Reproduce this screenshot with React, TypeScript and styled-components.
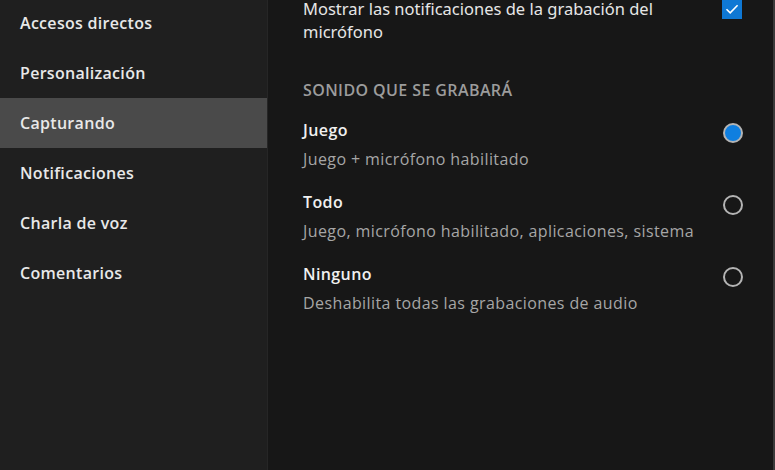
import React, { useState } from 'react'
import styled, { createGlobalStyle } from 'styled-components'

const GlobalStyle = createGlobalStyle`
  html, body {
    margin: 0;
    padding: 0;
    background: #171717;
  }
  #root {
    height: 470px;
  }
`

const navItems = [
  'Accesos directos',
  'Personalización',
  'Capturando',
  'Notificaciones',
  'Charla de voz',
  'Comentarios',
]

const options = [
  { id: 'game', title: 'Juego', desc: 'Juego + micrófono habilitado' },
  {
    id: 'all',
    title: 'Todo',
    desc: 'Juego, micrófono habilitado, aplicaciones, sistema',
  },
  { id: 'none', title: 'Ninguno', desc: 'Deshabilita todas las grabaciones de audio' },
]

export default function App() {
  const [active, setActive] = useState('Capturando')
  const [sound, setSound] = useState('game')
  const [notify, setNotify] = useState(true)

  return (
    <>
      <GlobalStyle />
      <Layout>
        <Sidebar>
          {navItems.map(item => (
            <NavItem
              key={item}
              selected={item === active}
              onClick={() => setActive(item)}
            >
              {item}
            </NavItem>
          ))}
        </Sidebar>

        <Main>
          <CheckRow>
            <CheckLabel>
              Mostrar las notificaciones de la grabación del micrófono
            </CheckLabel>
            <CheckBox checked={notify} onClick={() => setNotify(v => !v)}>
              {notify && (
                <svg width="14" height="14" viewBox="0 0 14 14">
                  <path
                    d="M1.5 7.2 L5.2 10.8 L12.6 3.2"
                    fill="none"
                    stroke="#fff"
                    strokeWidth="1.6"
                  />
                </svg>
              )}
            </CheckBox>
          </CheckRow>

          <SectionTitle>Sonido que se grabará</SectionTitle>

          <OptionList>
            {options.map(o => (
              <Option key={o.id} onClick={() => setSound(o.id)}>
                <OptionText>
                  <OptionTitle>{o.title}</OptionTitle>
                  <OptionDesc>{o.desc}</OptionDesc>
                </OptionText>
                <Radio checked={sound === o.id} />
              </Option>
            ))}
          </OptionList>
        </Main>
      </Layout>
    </>
  )
}

const Layout = styled.div`
  display: flex;
  height: 470px;
  width: 775px;
  overflow: hidden;
  background: #171717;
`

const Sidebar = styled.nav`
  display: flex;
  flex-flow: column;
  width: 267px;
  flex-shrink: 0;
  margin-top: -2px;
  background: #1f1f1f;
  border-right: solid 1px #262626;
`

const NavItem = styled.div<{ selected?: boolean }>`
  display: flex;
  align-items: center;
  height: 50px;
  padding-left: 20px;
  color: #e8e8e8;
  background: ${p => (p.selected ? '#4a4a4a' : 'transparent')};
  font-family: 'Open Sans', sans-serif;
  font-size: 16px;
  font-weight: 600;
  letter-spacing: 0.3px;
  cursor: pointer;
`

const Main = styled.main`
  flex: 1;
  padding: 0 30px 0 35px;
  margin-top: -3px;
  border-right: solid 2px #3a3a3a;
`

const CheckRow = styled.div`
  display: flex;
  justify-content: space-between;
  align-items: flex-start;
`

const CheckLabel = styled.div`
  width: 370px;
  color: #e6e6e6;
  font-family: 'Noto Sans', sans-serif;
  font-size: 16.5px;
  line-height: 23px;
`

const CheckBox = styled.div<{ checked?: boolean }>`
  display: flex;
  align-items: center;
  justify-content: center;
  width: 20px;
  height: 20px;
  margin-top: 2px;
  margin-right: 1px;
  background: ${p => (p.checked ? '#0f78d4' : 'transparent')};
  border: ${p => (p.checked ? 'none' : 'solid 2px #b0b0b0')};
  cursor: pointer;
`

const SectionTitle = styled.div`
  margin-top: 37px;
  color: #9c9c9c;
  font-family: 'Open Sans', sans-serif;
  font-size: 16px;
  font-weight: 600;
  letter-spacing: 0.4px;
  text-transform: uppercase;
  line-height: 20px;
`

const OptionList = styled.div`
  display: flex;
  flex-flow: column;
  gap: 23px;
  margin-top: 20px;
`

const Option = styled.div`
  display: flex;
  justify-content: space-between;
  align-items: flex-start;
  cursor: pointer;
`

const OptionText = styled.div`
  display: flex;
  flex-flow: column;
  gap: 9px;
`

const OptionTitle = styled.div`
  color: #f0f0f0;
  font-family: 'Open Sans', sans-serif;
  font-size: 16px;
  font-weight: 600;
  letter-spacing: 0.4px;
  line-height: 20px;
`

const OptionDesc = styled.div`
  color: #a6a6a6;
  font-family: 'Open Sans', sans-serif;
  font-size: 16px;
  font-weight: 500;
  letter-spacing: 0.4px;
  line-height: 20px;
`

const Radio = styled.div<{ checked?: boolean }>`
  box-sizing: border-box;
  width: 20px;
  height: 20px;
  margin-top: 3px;
  border-radius: 50%;
  border: solid 2px #b4b4b4;
  background: ${p => (p.checked ? '#0f7fe0' : 'transparent')};
`
